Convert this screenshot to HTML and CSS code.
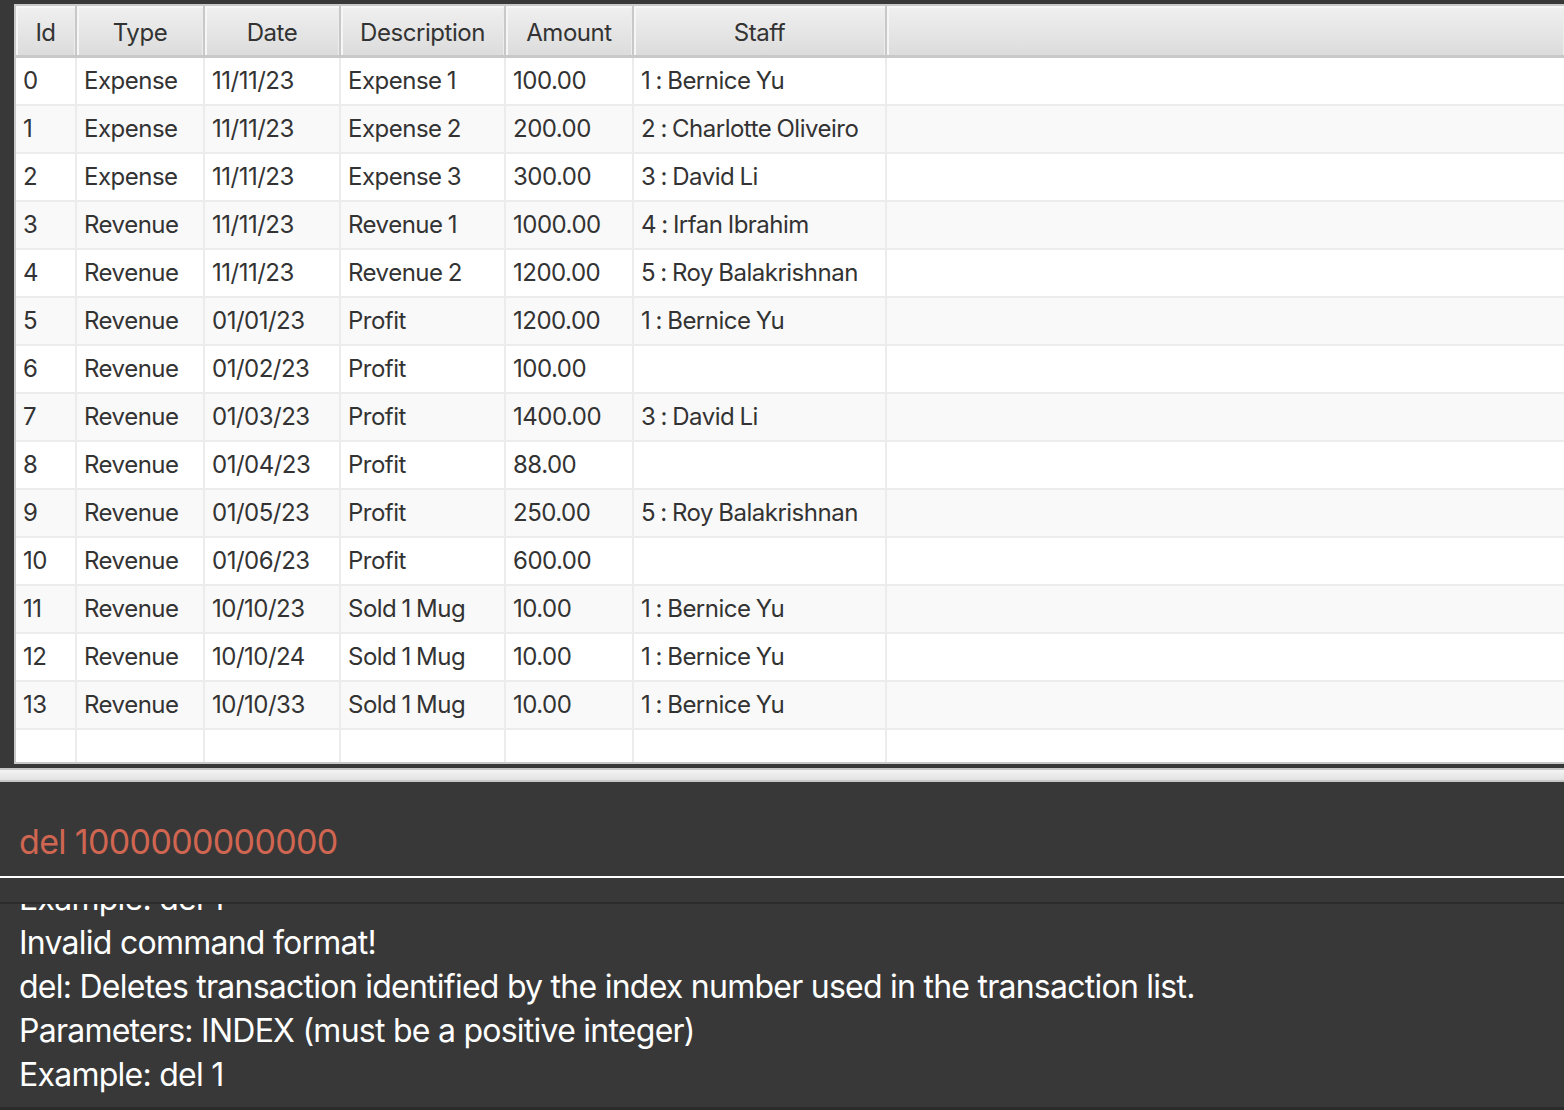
FILE: index.html
```html
<!DOCTYPE html>
<html>
<head>
<meta charset="utf-8">
<link rel="stylesheet" href="styles.css">
</head>
<body>
<div class="app">
  <div class="table-pane">
    <div class="table">
      <div class="hrow">
        <div class="hcell">Id</div>
        <div class="hcell">Type</div>
        <div class="hcell">Date</div>
        <div class="hcell">Description</div>
        <div class="hcell">Amount</div>
        <div class="hcell">Staff</div>
        <div class="hcell filler"></div>
      </div>
      <div class="row"><div class="cell">0</div><div class="cell">Expense</div><div class="cell">11/11/23</div><div class="cell">Expense 1</div><div class="cell">100.00</div><div class="cell">1 : Bernice Yu</div><div class="cell filler"></div></div>
      <div class="row"><div class="cell">1</div><div class="cell">Expense</div><div class="cell">11/11/23</div><div class="cell">Expense 2</div><div class="cell">200.00</div><div class="cell">2 : Charlotte Oliveiro</div><div class="cell filler"></div></div>
      <div class="row"><div class="cell">2</div><div class="cell">Expense</div><div class="cell">11/11/23</div><div class="cell">Expense 3</div><div class="cell">300.00</div><div class="cell">3 : David Li</div><div class="cell filler"></div></div>
      <div class="row"><div class="cell">3</div><div class="cell">Revenue</div><div class="cell">11/11/23</div><div class="cell">Revenue 1</div><div class="cell">1000.00</div><div class="cell">4 : Irfan Ibrahim</div><div class="cell filler"></div></div>
      <div class="row"><div class="cell">4</div><div class="cell">Revenue</div><div class="cell">11/11/23</div><div class="cell">Revenue 2</div><div class="cell">1200.00</div><div class="cell">5 : Roy Balakrishnan</div><div class="cell filler"></div></div>
      <div class="row"><div class="cell">5</div><div class="cell">Revenue</div><div class="cell">01/01/23</div><div class="cell">Profit</div><div class="cell">1200.00</div><div class="cell">1 : Bernice Yu</div><div class="cell filler"></div></div>
      <div class="row"><div class="cell">6</div><div class="cell">Revenue</div><div class="cell">01/02/23</div><div class="cell">Profit</div><div class="cell">100.00</div><div class="cell"></div><div class="cell filler"></div></div>
      <div class="row"><div class="cell">7</div><div class="cell">Revenue</div><div class="cell">01/03/23</div><div class="cell">Profit</div><div class="cell">1400.00</div><div class="cell">3 : David Li</div><div class="cell filler"></div></div>
      <div class="row"><div class="cell">8</div><div class="cell">Revenue</div><div class="cell">01/04/23</div><div class="cell">Profit</div><div class="cell">88.00</div><div class="cell"></div><div class="cell filler"></div></div>
      <div class="row"><div class="cell">9</div><div class="cell">Revenue</div><div class="cell">01/05/23</div><div class="cell">Profit</div><div class="cell">250.00</div><div class="cell">5 : Roy Balakrishnan</div><div class="cell filler"></div></div>
      <div class="row"><div class="cell">10</div><div class="cell">Revenue</div><div class="cell">01/06/23</div><div class="cell">Profit</div><div class="cell">600.00</div><div class="cell"></div><div class="cell filler"></div></div>
      <div class="row"><div class="cell">11</div><div class="cell">Revenue</div><div class="cell">10/10/23</div><div class="cell">Sold 1 Mug</div><div class="cell">10.00</div><div class="cell">1 : Bernice Yu</div><div class="cell filler"></div></div>
      <div class="row"><div class="cell">12</div><div class="cell">Revenue</div><div class="cell">10/10/24</div><div class="cell">Sold 1 Mug</div><div class="cell">10.00</div><div class="cell">1 : Bernice Yu</div><div class="cell filler"></div></div>
      <div class="row"><div class="cell">13</div><div class="cell">Revenue</div><div class="cell">10/10/33</div><div class="cell">Sold 1 Mug</div><div class="cell">10.00</div><div class="cell">1 : Bernice Yu</div><div class="cell filler"></div></div>
      <div class="row empty"><div class="cell"></div><div class="cell"></div><div class="cell"></div><div class="cell"></div><div class="cell"></div><div class="cell"></div><div class="cell filler"></div></div>
    </div>
  </div>
  <div class="splitter"></div>
  <div class="command-box">
    <div class="command-text">del 1000000000000</div>
  </div>
  <div class="gap-bar"></div>
  <div class="result-box">
    <div class="result-text">
      <div class="line">Example: del 1</div>
      <div class="line">Invalid command format!</div>
      <div class="line">del: Deletes transaction identified by the index number used in the transaction list.</div>
      <div class="line">Parameters: INDEX (must be a positive integer)</div>
      <div class="line">Example: del 1</div>
    </div>
  </div>
</div>
</body>
</html>
```
FILE: styles.css
```css
* { box-sizing: border-box; }
html, body {
  margin: 0;
  padding: 0;
  background: #383838;
  width: 1564px;
  height: 1110px;
  overflow: hidden;
  font-family: Inter, "Noto Sans", "DejaVu Sans", sans-serif;
}
.app {
  display: flex;
  flex-direction: column;
  height: 1110px;
}
.table-pane {
  padding: 4px 0 0 14px;
  height: 764px;
  flex: none;
}
.table {
  height: 760px;
  border: 2px solid #c8c8c8;
  border-right: none;
  background: #ffffff;
  overflow: hidden;
}
.hrow, .row {
  display: grid;
  grid-template-columns: 61px 128px 136px 165px 128px 253px 1fr;
}
.hrow {
  height: 52px;
  border-bottom: 3px solid #c8c8c8;
}
.hcell {
  background: linear-gradient(#f0f0f0, #dcdcdc);
  border-right: 2px solid #c8c8c8;
  box-shadow: inset 2px 2px 0 #f6f6f6, inset -1px 0 0 #ececec;
  color: #333333;
  font-size: 24px;
  letter-spacing: -0.45px;
  display: flex;
  align-items: center;
  justify-content: center;
  padding-top: 3px;
}
.hcell.filler { border-right: none; }
.row {
  height: 48px;
  background: #ffffff;
}
.row:nth-child(odd) { background: #f9f9f9; }
.row:nth-child(even) { background: #ffffff; }
.row.empty { height: 34px; }
.cell {
  border-right: 2px solid #ececec;
  border-bottom: 2px solid #ececec;
  color: #333333;
  font-size: 24px;
  letter-spacing: -0.5px;
  word-spacing: -1px;
  display: flex;
  align-items: center;
  padding-left: 7px;
  padding-bottom: 1px;
  white-space: nowrap;
}
.cell.filler { border-right: none; }
.row.empty .cell { border-bottom: none; }
.splitter {
  flex: none;
  height: 14px;
  margin-top: 4px;
  border-top: 2px solid #c6c6c6;
  border-bottom: 2px solid #c6c6c6;
  background: linear-gradient(#f4f4f4, #e2e2e2);
}
.command-box {
  flex: none;
  height: 96px;
  border-bottom: 2px solid #ffffff;
  display: flex;
  align-items: flex-end;
  padding: 0 0 12px 19px;
}
.command-text {
  color: #d06651;
  font-size: 34px;
  line-height: 44px;
  letter-spacing: -0.65px;
}
.gap-bar {
  flex: none;
  height: 26px;
  border-bottom: 2px solid #2b2b2b;
}
.result-box {
  flex: 1;
  overflow: hidden;
  border-bottom: 3px solid #2b2b2b;
  padding-left: 19px;
}
.result-text {
  margin-top: -27px;
  color: #ffffff;
  font-size: 32px;
  line-height: 44px;
  letter-spacing: -0.75px;
}
.line { white-space: nowrap; }
```
